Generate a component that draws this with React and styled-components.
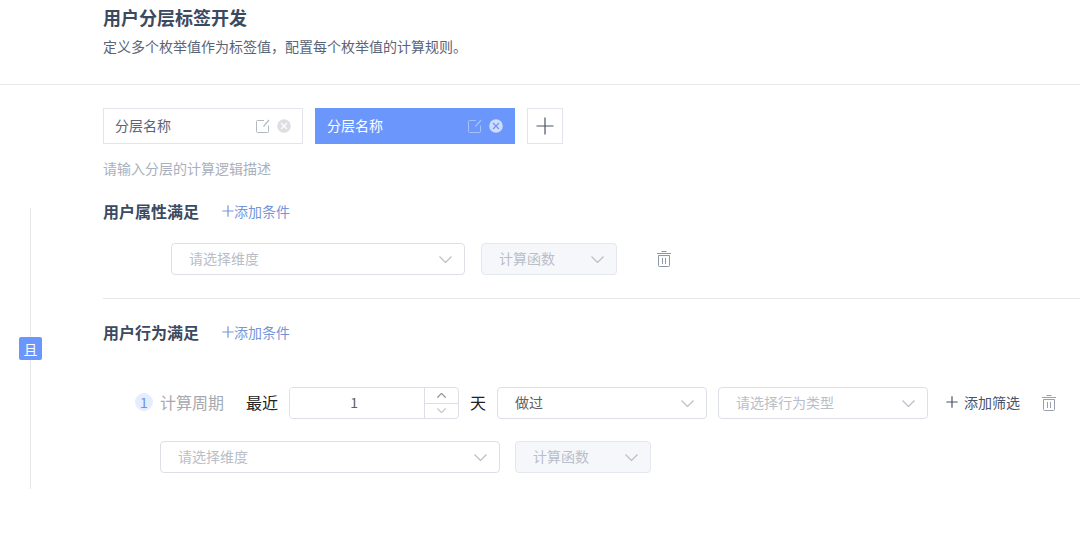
// App.jsx
import React, { useState } from 'react';
import styled, { createGlobalStyle } from 'styled-components';

const GlobalStyle = createGlobalStyle`
  * {
    box-sizing: border-box;
  }

  body {
    margin: 0;
    background: #fff;
    color: #5a6478;
    font-family: "Noto Sans CJK SC", sans-serif;
    font-size: 14px;
    line-height: 20px;
  }

  button, input, select {
    margin: 0;
    font: inherit;
    color: inherit;
  }
`;

const EditIcon = () => (
  <svg width="14" height="14" viewBox="0 0 14 14" fill="none" stroke="currentColor" aria-hidden="true">
    <path d="M8 1.5H1.5a1 1 0 0 0-1 1v10a1 1 0 0 0 1 1h10a1 1 0 0 0 1-1V6.5" />
    <path d="M7.5 7.5L13 1" strokeWidth="1.2" />
  </svg>
);

const CloseIcon = ({ cross }) => (
  <svg width="14" height="14" viewBox="0 0 14 14" fill="none" aria-hidden="true">
    <circle cx="7" cy="7" r="6.8" fill="currentColor" />
    <path d="M4 4l6 6M10 4l-6 6" stroke={cross} strokeWidth="1.2" />
  </svg>
);

const PlusIcon = ({ size }) => (
  <svg width={size} height={size} viewBox="0 0 18 18" fill="none" stroke="currentColor" aria-hidden="true">
    <path d="M9 0.5v17M0.5 9h17" vectorEffect="non-scaling-stroke" strokeWidth="1.2" />
  </svg>
);

const TrashIcon = () => (
  <svg width="14" height="16" viewBox="0 0 14 16" fill="none" stroke="currentColor" aria-hidden="true">
    <path d="M0 2.5h14M4.5 0.5h5" />
    <path d="M1.5 4.5h11v10a1 1 0 0 1-1 1h-9a1 1 0 0 1-1-1z" />
    <path d="M5.5 7v6M8.5 7v6" />
  </svg>
);

const Arrow = ({ up, small }) => (
  <svg width={small ? 9 : 13} height={small ? 5 : 7} viewBox="0 0 13 7" fill="none" stroke="currentColor" aria-hidden="true">
    <path
      d={up ? 'M0.5 6.5l6-6 6 6' : 'M0.5 0.5l6 6 6-6'}
      vectorEffect="non-scaling-stroke"
      strokeWidth="1.2"
    />
  </svg>
);

function Select({ label, options = [], placeholder, disabled, basis, grow }) {
  const [value, setValue] = useState(placeholder ? '' : options[0]);

  return (
    <SelectBox $basis={basis} $grow={grow}>
      <SelectField
        aria-label={label}
        value={value}
        disabled={disabled}
        $empty={value === ''}
        onChange={e => setValue(e.target.value)}
      >
        {placeholder && <option value="">{placeholder}</option>}
        {options.map(option => (
          <option key={option} value={option}>{option}</option>
        ))}
      </SelectField>
      <SelectArrow><Arrow /></SelectArrow>
    </SelectBox>
  );
}

function DayInput() {
  const [days, setDays] = useState(1);

  return (
    <Stepper>
      <StepperInput
        type="number"
        aria-label="天数"
        value={days}
        onChange={e => setDays(Number(e.target.value))}
      />
      <StepperButtons>
        <StepButton type="button" aria-label="增加" onClick={() => setDays(days + 1)}>
          <Arrow up small />
        </StepButton>
        <StepButton type="button" aria-label="减少" disabled={days <= 1} onClick={() => setDays(days - 1)}>
          <Arrow small />
        </StepButton>
      </StepperButtons>
    </Stepper>
  );
}

export function App() {
  const [layers, setLayers] = useState([
    { id: 1, name: '分层名称' },
    { id: 2, name: '分层名称' },
  ]);
  const [activeId, setActiveId] = useState(2);

  const addLayer = () => {
    const id = Math.max(0, ...layers.map(layer => layer.id)) + 1;
    setLayers([...layers, { id, name: '分层名称' }]);
    setActiveId(id);
  };

  const removeLayer = (id) => {
    setLayers(layers.filter(layer => layer.id !== id));
  };

  return (
    <>
      <GlobalStyle />
      <Header>
        <Title>用户分层标签开发</Title>
        <Subtitle>定义多个枚举值作为标签值，配置每个枚举值的计算规则。</Subtitle>
      </Header>

      <Layers>
        <LayerList>
          {layers.map(layer => (
            <Layer key={layer.id} $active={layer.id === activeId}>
              <LayerName type="button" onClick={() => setActiveId(layer.id)}>{layer.name}</LayerName>
              <LayerAction type="button" aria-label="编辑" $active={layer.id === activeId}>
                <EditIcon />
              </LayerAction>
              <LayerAction
                type="button"
                aria-label="删除"
                $filled
                $active={layer.id === activeId}
                onClick={() => removeLayer(layer.id)}
              >
                <CloseIcon cross={layer.id === activeId ? '#6b96fc' : '#fff'} />
              </LayerAction>
            </Layer>
          ))}
          <AddLayer type="button" aria-label="新增分层" onClick={addLayer}>
            <PlusIcon size={18} />
          </AddLayer>
        </LayerList>
        <Description type="text" aria-label="分层描述" placeholder="请输入分层的计算逻辑描述" />
      </Layers>

      <Rules>
        <Rail>
          <RailLine />
          <RailButton type="button">且</RailButton>
          <RailLine />
        </Rail>
        <Groups>
          <AttributeGroup>
            <GroupHeader>
              <GroupTitle>用户属性满足</GroupTitle>
              <AddCondition type="button"><PlusIcon size={12} />添加条件</AddCondition>
            </GroupHeader>
            <AttributeRow>
              <Select label="维度" placeholder="请选择维度" basis={294} />
              <Select label="计算函数" placeholder="计算函数" disabled basis={136} />
              <DeleteAttribute type="button" aria-label="删除条件"><TrashIcon /></DeleteAttribute>
            </AttributeRow>
          </AttributeGroup>

          <BehaviorGroup>
            <GroupHeader>
              <GroupTitle>用户行为满足</GroupTitle>
              <AddCondition type="button"><PlusIcon size={12} />添加条件</AddCondition>
            </GroupHeader>
            <BehaviorRow>
              <Index>1</Index>
              <Period>计算周期</Period>
              <Unit>最近</Unit>
              <DayInput />
              <Unit>天</Unit>
              <Select label="是否做过" options={['做过', '未做过']} basis={210} grow />
              <Select label="行为类型" placeholder="请选择行为类型" basis={210} grow />
              <AddFilter type="button"><PlusIcon size={12} />添加筛选</AddFilter>
              <DeleteBehavior type="button" aria-label="删除条件"><TrashIcon /></DeleteBehavior>
            </BehaviorRow>
            <FilterRow>
              <Select label="维度" placeholder="请选择维度" basis={340} />
              <Select label="计算函数" placeholder="计算函数" disabled basis={136} />
            </FilterRow>
          </BehaviorGroup>
        </Groups>
      </Rules>
    </>
  );
}

const Header = styled.header`
  padding: 5px 24px 28px 103px;
  border-bottom: 1px solid #e6e8ec;
`;

const Title = styled.h1`
  margin: 0 0 7px;
  color: #3b4a60;
  font-size: 18px;
  font-weight: 700;
  line-height: 24px;
`;

const Subtitle = styled.p`
  margin: 0;
`;

const Layers = styled.section`
  padding: 23px 24px 21px 103px;
`;

const LayerList = styled.div`
  display: flex;
  gap: 12px;
  margin-bottom: 14px;
`;

const Layer = styled.div`
  display: flex;
  align-items: center;
  gap: 7px;
  width: 200px;
  height: 36px;
  padding: 0 11px;
  border: 1px solid ${props => (props.$active ? '#6b96fc' : '#e2e5ea')};
  background: ${props => (props.$active ? '#6b96fc' : '#fff')};
  color: ${props => (props.$active ? '#fff' : '#5a6478')};
`;

const BareButton = styled.button`
  display: flex;
  align-items: center;
  padding: 0;
  border: none;
  background: none;
  cursor: pointer;
`;

const LayerName = styled(BareButton)`
  flex: 1;
  padding-bottom: 2px;
`;

const LayerAction = styled(BareButton)`
  color: ${props => {
    if (props.$active) return props.$filled ? '#cfdcfc' : '#a9c1fb';
    return props.$filled ? '#dcdee2' : '#b4b8c0';
  }};
`;

const AddLayer = styled(BareButton)`
  justify-content: center;
  width: 36px;
  height: 36px;
  border: 1px solid #e2e5ea;
  color: #4a5468;
`;

const Description = styled.input`
  display: block;
  width: 100%;
  height: 20px;
  padding: 0;
  border: none;
  outline: none;

  &::placeholder {
    color: #a9b0bd;
    opacity: 1;
  }
`;

const Rules = styled.main`
  display: flex;
  padding-left: 19px;
`;

const Rail = styled.div`
  display: flex;
  flex-direction: column;
  align-items: center;
  width: 23px;
  margin-top: 9px;
`;

const RailLine = styled.div`
  flex: 1;
  width: 1px;
  background: #e4e6ea;
`;

const RailButton = styled(BareButton)`
  justify-content: center;
  width: 23px;
  height: 23px;
  border-radius: 2px;
  background: #6b96fc;
  color: #fff;
`;

const Groups = styled.div`
  flex: 1;
  min-width: 0;
  padding-left: 61px;
`;

const AttributeGroup = styled.section`
  padding-bottom: 23px;
  border-bottom: 1px solid #e6e8ec;
`;

const BehaviorGroup = styled.section`
  padding: 21px 24px 16px 0;
`;

const GroupHeader = styled.div`
  display: flex;
  align-items: center;
  gap: 23px;
`;

const GroupTitle = styled.h2`
  margin: 0;
  color: #3b4a60;
  font-size: 16px;
  font-weight: 700;
  line-height: 24px;
`;

const AddCondition = styled(BareButton)`
  color: #7496d8;
`;

const AttributeRow = styled.div`
  display: flex;
  align-items: center;
  gap: 16px;
  margin-top: 20px;
  padding-left: 68px;
`;

const BehaviorRow = styled.div`
  display: flex;
  align-items: center;
  gap: 11px;
  margin-top: 43px;
  padding-left: 32px;
  white-space: nowrap;
`;

const FilterRow = styled.div`
  display: flex;
  gap: 15px;
  margin-top: 22px;
  padding-left: 57px;
`;

const SelectBox = styled.div`
  display: grid;
  flex: ${props => (props.$grow ? 1 : 0)} 1 ${props => props.$basis}px;
  align-items: center;
  min-width: 0;
`;

const SelectField = styled.select`
  grid-area: 1 / 1;
  width: 100%;
  height: 32px;
  padding: 0 32px 2px 17px;
  border: 1px solid #dcdfe6;
  border-radius: 4px;
  appearance: none;
  background: #fff;
  color: ${props => (props.$empty ? '#b9bec8' : '#606266')};

  &:disabled {
    border-color: #e4e7ed;
    background: #f5f7fa;
    opacity: 1;
  }
`;

const SelectArrow = styled.span`
  display: flex;
  grid-area: 1 / 1;
  justify-self: end;
  margin-right: 13px;
  color: #b9bec8;
  pointer-events: none;
`;

const DeleteAttribute = styled(BareButton)`
  margin-left: 24px;
  color: #8d97a6;
`;

const Index = styled.span`
  width: 18px;
  height: 18px;
  margin-bottom: 3px;
  border-radius: 50%;
  background: #e3edfd;
  color: #6b96dc;
  line-height: 18px;
  text-align: center;
`;

const Period = styled.span`
  margin: 0 11px 0 -4px;
  padding-bottom: 2px;
  color: #a5a9b0;
  font-size: 16px;
`;

const Unit = styled.span`
  padding-bottom: 2px;
  color: #222;
  font-size: 16px;
`;

const Stepper = styled.div`
  display: flex;
  width: 170px;
  height: 32px;
  border: 1px solid #dcdfe6;
  border-radius: 4px;
  overflow: hidden;
`;

const StepperInput = styled.input`
  flex: 1;
  min-width: 0;
  padding: 0 14px 2px 8px;
  border: none;
  outline: none;
  appearance: textfield;
  color: #606266;
  text-align: center;

  &::-webkit-inner-spin-button {
    appearance: none;
  }
`;

const StepperButtons = styled.div`
  display: flex;
  flex-direction: column;
  width: 34px;
  border-left: 1px solid #dcdfe6;
`;

const StepButton = styled(BareButton)`
  flex: 1;
  justify-content: center;
  color: #8a8e96;

  & + & {
    border-top: 1px solid #dcdfe6;
  }

  &:disabled {
    color: #c0c4cc;
  }
`;

const AddFilter = styled(BareButton)`
  gap: 6px;
  margin-left: 7px;
  padding-bottom: 2px;
  color: #4a5468;
`;

const DeleteBehavior = styled(BareButton)`
  margin-left: 11px;
  color: #98a0ad;
`;

export default App;
